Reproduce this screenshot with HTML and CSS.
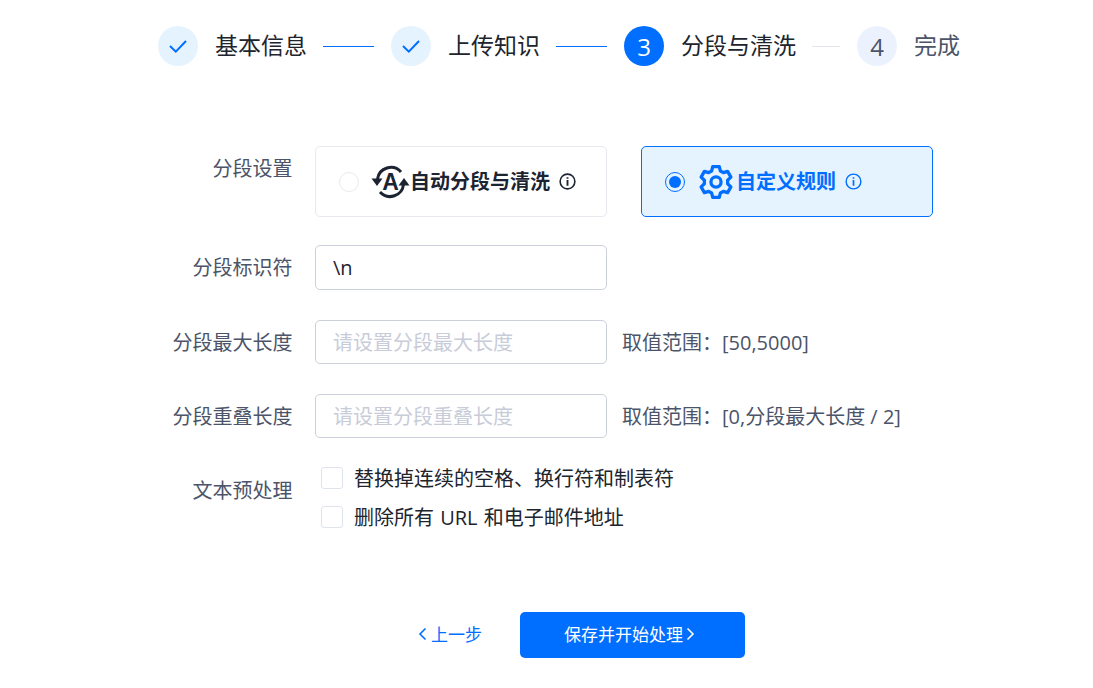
FILE: index.html
```html
<!DOCTYPE html>
<html lang="zh">
<head>
<meta charset="utf-8">
<title>分段与清洗</title>
<link rel="stylesheet" href="styles.css">
</head>
<body>
<div class="page">
  <div class="steps">
    <span class="dot done"><svg width="20" height="20" viewBox="0 0 20 20"><path d="M2 10l5.800 5.600L18 5" fill="none" stroke="#006eff" stroke-width="2"/></svg></span>
    <span class="step-text">基本信息</span>
    <span class="line blue"></span>
    <span class="dot done"><svg width="20" height="20" viewBox="0 0 20 20"><path d="M2 10l5.800 5.600L18 5" fill="none" stroke="#006eff" stroke-width="2"/></svg></span>
    <span class="step-text">上传知识</span>
    <span class="line blue"></span>
    <span class="dot active">3</span>
    <span class="step-text">分段与清洗</span>
    <span class="line grey"></span>
    <span class="dot todo">4</span>
    <span class="step-text muted">完成</span>
  </div>

  <div class="form">
    <div class="row row-mode">
      <div class="label">分段设置</div>
      <div class="cards">
        <div class="card">
          <span class="radio"></span>
          <svg class="mode-icon" width="39" height="36" viewBox="0 0 39 36">
            <path d="M6.500 15A13.500 13.500 0 0 1 30 8" fill="none" stroke="#1c2331" stroke-width="3"/>
            <path d="M32.500 20A13.500 13.500 0 0 1 9 28" fill="none" stroke="#1c2331" stroke-width="3"/>
            <path d="M0.500 14.500H11.500L6 22z" fill="#1c2331"/>
            <path d="M27.500 21.500H38.500L33 14z" fill="#1c2331"/>
            <text x="19.500" y="26" class="mode-a">A</text>
          </svg>
          <span class="card-text">自动分段与清洗</span>
          <svg class="info" width="17" height="17" viewBox="0 0 18 18"><circle cx="9" cy="9" r="7.800" fill="none" stroke="#1c2331" stroke-width="1.700"/><path d="M9 7.500V13.500M9 4.500V6.200" fill="none" stroke="#1c2331" stroke-width="2"/></svg>
        </div>
        <div class="card selected">
          <span class="radio on"></span>
          <svg class="mode-icon gear" width="36" height="36" viewBox="1 1 22 22"><path d="M10 2.600h4l.7 2.700 1.800 1 2.600-.8 2 3.500-2 1.900v2.200l2 1.900-2 3.500-2.600-.8-1.800 1-.7 2.700h-4l-.7-2.700-1.800-1-2.600.8-2-3.500 2-1.900v-2.200l-2-1.900 2-3.500 2.600.8 1.800-1z" fill="none" stroke="#006eff" stroke-width="2" stroke-linejoin="round"/><circle cx="12" cy="12" r="3.100" fill="none" stroke="#006eff" stroke-width="2"/></svg>
          <span class="card-text blue-text">自定义规则</span>
          <svg class="info" width="17" height="17" viewBox="0 0 18 18"><circle cx="9" cy="9" r="7.800" fill="none" stroke="#006eff" stroke-width="1.500"/><path d="M9 7.500V13.500M9 4.500V6.200" fill="none" stroke="#006eff" stroke-width="1.800"/></svg>
        </div>
      </div>
    </div>

    <div class="row row-sep">
      <div class="label">分段标识符</div>
      <div class="input filled input-tall">\n</div>
    </div>

    <div class="row row-max">
      <div class="label">分段最大长度</div>
      <div class="input">请设置分段最大长度</div>
      <div class="hint">取值范围：[50,5000]</div>
    </div>

    <div class="row row-overlap">
      <div class="label">分段重叠长度</div>
      <div class="input">请设置分段重叠长度</div>
      <div class="hint">取值范围：[0,分段最大长度 / 2]</div>
    </div>

    <div class="row row-check">
      <div class="label">文本预处理</div>
      <div class="checks">
        <div class="check"><span class="box"></span><span>替换掉连续的空格、换行符和制表符</span></div>
        <div class="check"><span class="box"></span><span class="check-url">删除所有 URL 和电子邮件地址</span></div>
      </div>
    </div>
  </div>

  <div class="actions">
    <button class="prev"><svg width="11" height="14" viewBox="0 0 11 14"><path d="M8.500 1.500L3 7l5.500 5.500" fill="none" stroke="#006eff" stroke-width="1.600"/></svg>上一步</button>
    <button class="next">保存并开始处理<svg width="11" height="14" viewBox="0 0 11 14"><path d="M2.500 1.500L8 7l-5.500 5.500" fill="none" stroke="#fff" stroke-width="1.600"/></svg></button>
  </div>
</div>
</body>
</html>
```
FILE: styles.css
```css
* { box-sizing: border-box; }
html, body { margin: 0; padding: 0; background: #fff; }
body {
  font-family: "Open Sans", "Noto Sans CJK SC", sans-serif;
  color: #1c2331;
  height: 688px;
  overflow: hidden;
}
.page { width: 1093px; }

.steps {
  display: flex;
  align-items: center;
  padding: 26px 0 0 158px;
  height: 66px;
}
.dot {
  width: 40px;
  height: 40px;
  flex: none;
  border-radius: 50%;
  display: flex;
  align-items: center;
  justify-content: center;
  font-size: 24px;
  margin-right: 17px;
}
.done { background: #e5f3ff; }
.active { background: #006eff; color: #fff; }
.todo { background: #ebf2fe; color: #4b5468; }
.step-text { font-size: 23px; line-height: 32px; margin: 0 16px 2px 0; color: #20242c; white-space: nowrap; }
.step-text.muted { color: #4b5468; }
.line { height: 1px; flex: none; margin-right: 17px; }
.line.blue { width: 51px; background: #006eff; }
.line.grey { width: 28px; background: #e2e5eb; }

.form { padding-top: 80px; }
.row { display: flex; align-items: flex-start; }
.label {
  width: 292.500px;
  flex: none;
  margin-right: 22.500px;
  text-align: right;
  font-size: 20px;
  line-height: 46px;
  color: #4b5468;
}
.row-mode { height: 99px; }
.row-sep { height: 75px; }
.row-max { height: 74px; }
.row-overlap { height: 68px; }

.cards { display: flex; gap: 34px; }
.card {
  width: 292px;
  height: 71px;
  border: 1px solid #e7e9ef;
  border-radius: 5px;
  background: #fff;
  display: flex;
  align-items: center;
  padding-left: 23px;
}
.card.selected { border-color: #006eff; background: #e5f3ff; }
.radio {
  width: 20px;
  height: 20px;
  flex: none;
  border-radius: 50%;
  border: 1px solid #e7e9ef;
  background: #fff;
  margin-right: 12px;
}
.radio.on { border: 1.500px solid #006eff; position: relative; background: #e5f3ff; }
.radio.on::after {
  content: "";
  position: absolute;
  inset: 3px;
  border-radius: 50%;
  background: #006eff;
}
.mode-icon { flex: none; }
.mode-a { font-family: "Liberation Sans", sans-serif; font-size: 23px; font-weight: 700; fill: #1c2331; text-anchor: middle; }
.gear { margin-right: 2px; margin-left: 1px; }
.card-text { font-size: 20px; line-height: 32px; font-weight: 700; white-space: nowrap; margin-right: 9px; }
.blue-text { color: #006eff; }
.info { flex: none; }

.input {
  width: 292px;
  height: 44px;
  flex: none;
  border: 1px solid #ccd0db;
  border-radius: 5px;
  padding-left: 17px;
  font-size: 20px;
  line-height: 44px;
  color: #c8ccd8;
  background: #fff;
  white-space: nowrap;
}
.input-tall { height: 45px; line-height: 43px; }
.filled { color: #1c2331; }
.hint { margin-left: 15px; font-size: 20px; line-height: 46px; color: #4b5468; white-space: nowrap; }

.row-check .label { line-height: 58px; }
.checks { display: flex; flex-direction: column; gap: 16px; padding: 4px 0 0 6px; }
.check { display: flex; align-items: center; height: 23px; font-size: 20px; color: #20242c; white-space: nowrap; }
.check-url { word-spacing: 1px; }
.box {
  width: 22px;
  height: 22px;
  flex: none;
  border: 1px solid #dfe3ee;
  border-radius: 3px;
  background: #fff;
  margin-right: 11px;
}

.actions { display: flex; align-items: center; padding: 84px 0 0 417px; }
.actions button { font-family: inherit; border: 0; display: flex; align-items: center; white-space: nowrap; cursor: pointer; }
.prev { background: none; color: #006eff; font-size: 17px; padding: 0 0 3px; width: 103px; gap: 3px; }
.next {
  width: 225px;
  height: 46px;
  padding: 0 5px 3px 0;
  background: #006eff;
  color: #fff;
  border-radius: 5px;
  font-size: 17px;
  justify-content: center;
  gap: 2px;
}
```
